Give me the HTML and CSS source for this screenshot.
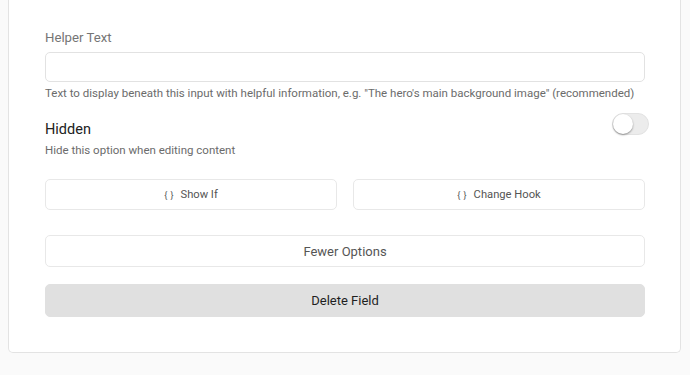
FILE: index.html
```html
<!DOCTYPE html>
<html>
<head>
    <title>Field Options</title>
    <link rel="stylesheet" href="styles.css">
</head>
<body>
    <div class="card">
        <div class="form-group">
            <label for="helper">Helper Text</label>
            <input type="text" id="helper" name="helper">
            <div class="help">Text to display beneath this input with helpful information, e.g. "The hero's main background image" (recommended)</div>
        </div>
        <div class="toggle-row">
            <div class="toggle-text">
                <div class="toggle-title">Hidden</div>
                <div class="help">Hide this option when editing content</div>
            </div>
            <div class="switch"><span class="knob"></span></div>
        </div>
        <div class="code-buttons">
            <button class="btn small"><span class="braces">{ }</span>Show If</button>
            <button class="btn small"><span class="braces">{ }</span>Change Hook</button>
        </div>
        <button class="btn wide">Fewer Options</button>
        <button class="btn wide danger">Delete Field</button>
    </div>
</body>
</html>
```

FILE: styles.css
```css
body {
    margin: 0;
    background-color: #fafafa;
    font-family: Roboto, "Liberation Sans", sans-serif;
}
.card {
    width: 600px;
    margin-left: 8px;
    padding: 28px 35px 35px 36px;
    background-color: #fff;
    border: 1px solid #e3e3e3;
    border-top: none;
    border-radius: 0 0 5px 5px;
}
label {
    display: block;
    font-size: 13.2px;
    line-height: 20px;
    color: #757575;
    margin-bottom: 4px;
}
input {
    display: block;
    box-sizing: border-box;
    width: 100%;
    height: 30px;
    margin: 0;
    border: 1px solid #e2e2e2;
    border-radius: 5px;
    font-family: inherit;
}
.help {
    font-size: 11.5px;
    line-height: 16px;
    color: #6b6b6b;
    margin-top: 3px;
}
.toggle-row {
    display: flex;
    justify-content: space-between;
    align-items: flex-start;
    margin-top: 12px;
}
.toggle-text {
    padding-top: 7px;
}
.toggle-title {
    font-size: 14.5px;
    line-height: 20px;
    color: #212121;
}
.toggle-text .help {
    margin-top: 2px;
}
.switch {
    position: relative;
    width: 37px;
    height: 22px;
    margin-right: -4px;
    border-radius: 11px;
    background-color: #ececec;
    border: 1px solid #e2e2e2;
    box-sizing: border-box;
}
.knob {
    position: absolute;
    left: 0;
    top: 0;
    width: 20px;
    height: 20px;
    border-radius: 50%;
    background-color: #fff;
    box-shadow: 0 1px 2px rgba(0, 0, 0, 0.4);
}
.code-buttons {
    display: flex;
    gap: 16px;
    margin-top: 21px;
}
.btn {
    display: flex;
    align-items: center;
    justify-content: center;
    box-sizing: border-box;
    background-color: #fff;
    border: 1px solid #e8e8e8;
    border-radius: 5px;
    font-family: inherit;
    color: #555;
    cursor: pointer;
    padding: 0;
}
.small {
    flex: 1;
    height: 31px;
    font-size: 11.2px;
}
.braces {
    font-size: 9px;
    margin-right: 7px;
    word-spacing: 1px;
}
.wide {
    width: 100%;
    height: 32px;
    font-size: 13px;
    margin-top: 25px;
}
.danger {
    height: 33px;
    margin-top: 17px;
    background-color: #e0e0e0;
    border-color: #e0e0e0;
    color: #1f1f1f;
}
```
